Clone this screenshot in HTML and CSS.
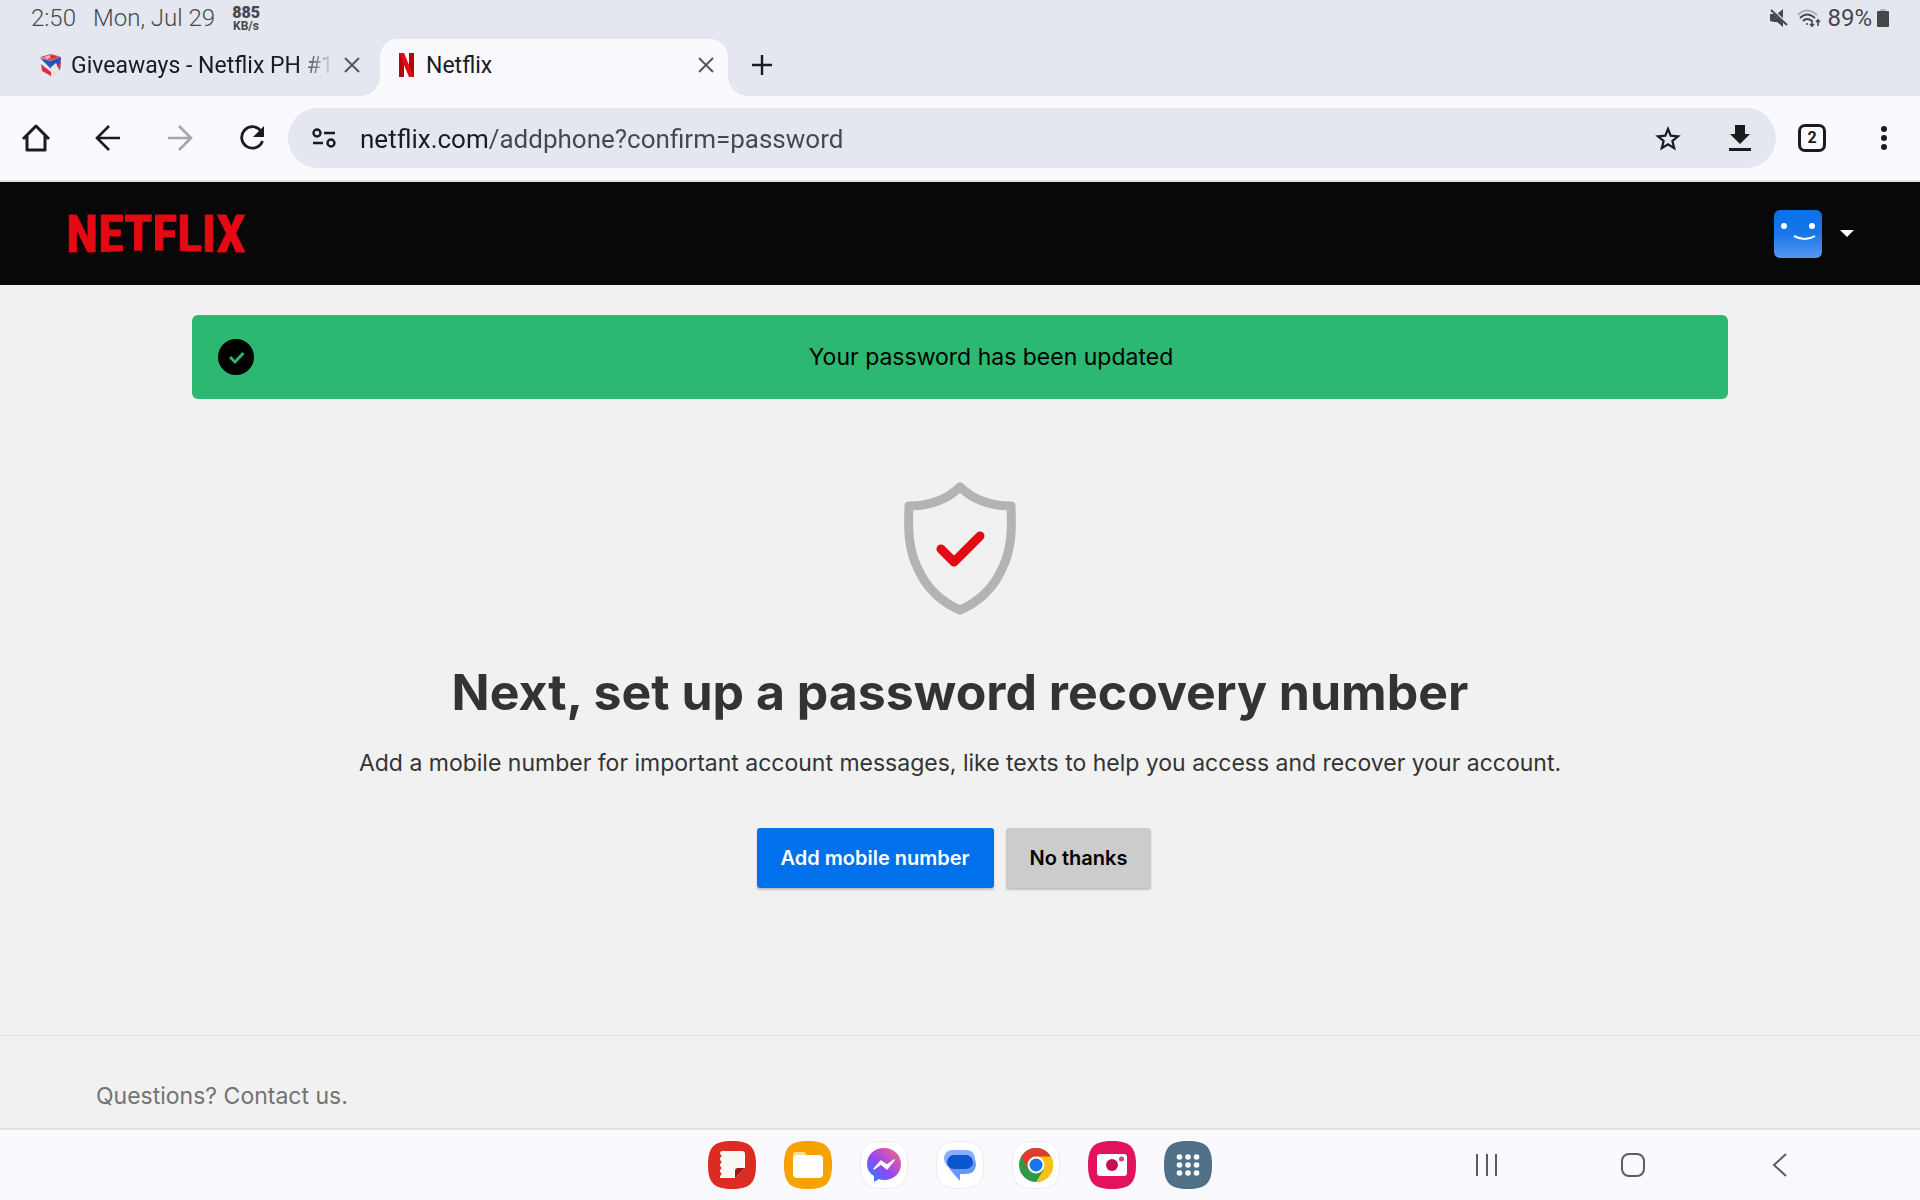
FILE: index.html
```html
<!DOCTYPE html>
<html lang="en">
<head>
    <meta charset="UTF-8">
    <meta name="viewport" content="width=device-width, initial-scale=1.0">
    <title>Netflix</title>
    <link rel="stylesheet" href="styles.css">
</head>
<body>
    <!-- Status bar -->
    <div class="status-bar">
        <span class="clock">2:50</span>
        <span class="date">Mon, Jul 29</span>
        <span class="speed"><b>885</b><small>KB/s</small></span>
        <div class="status-right">
            <svg width="18" height="18" viewBox="0 0 18 18" fill="#46474b">
                <path d="M0 5h4l9 8v5L7 13H4l-4-1z"/>
                <path d="M7 5l6-5v11z"/>
                <path d="M1 0l17 16" stroke="#e4e7f0" stroke-width="3"/>
                <path d="M1 1l16 15" stroke="#46474b" stroke-width="2"/>
            </svg>
            <svg class="wifi" width="25" height="20" viewBox="0 0 25 20" fill="none" stroke="#46474b" stroke-width="2">
                <path d="M1 7q9-9 19 0" stroke="#a9abb2"/>
                <path d="M3 10q7-7 15 0M6 13q4-4 9 0"/>
                <circle cx="10" cy="16" r="1" fill="#46474b" stroke="none"/>
                <path d="M15 12v6m-2-2l2 2 2-2M21 18v-6m-2 2l2-2 2 2" stroke-width="1.6"/>
            </svg>
            <span class="percent">89%</span>
            <svg width="12" height="18" viewBox="0 0 12 18">
                <rect x="3" y="0" width="6" height="3" rx="1" fill="#b4b6bd"/>
                <rect x="0" y="2" width="12" height="16" rx="1" fill="#46474b"/>
            </svg>
        </div>
    </div>

    <!-- Tabs -->
    <nav class="tabs">
        <div class="tab">
            <svg class="favicon" width="24" height="24" viewBox="0 0 24 24">
                <path d="M1 4l11-3 10 3-10 4z" fill="#e34a4f"/>
                <path d="M5 4l7-2 3 1-7 3z" fill="#f3b9bd"/>
                <path d="M12 2l6 1-4 2-3-1z" fill="#c62a33"/>
                <path d="M1 5l11 3v15L3 18z" fill="#e9e9f4"/>
                <path d="M1 5l11 3v8z" fill="#2857b9"/>
                <path d="M2 11l10 8v4l-9-5z" fill="#d8303c"/>
                <path d="M12 8l10-4-1 13-9 6z" fill="#2450b5"/>
                <path d="M12 14l5-4 4 8-9 5z" fill="#e8e4d8"/>
                <path d="M18 13l4-5-1 9z" fill="#d53642"/>
            </svg>
            <a class="tab-title fade" href="#">Giveaways - Netflix PH #1</a>
            <button class="close" aria-label="Close tab">
                <svg width="16" height="16" viewBox="0 0 16 16"><path d="M1 1l14 14M15 1L1 15" stroke="#55575d" stroke-width="2"/></svg>
            </button>
        </div>
        <div class="tab active">
            <svg class="favicon" width="15" height="24" viewBox="0 0 15 24">
                <rect width="5" height="24" fill="#b1060f"/>
                <rect x="10" width="5" height="24" fill="#b1060f"/>
                <path d="M0 0h5l10 24h-5z" fill="#e50914"/>
            </svg>
            <a class="tab-title" href="#">Netflix</a>
            <button class="close" aria-label="Close tab">
                <svg width="16" height="16" viewBox="0 0 16 16"><path d="M1 1l14 14M15 1L1 15" stroke="#55575d" stroke-width="2"/></svg>
            </button>
        </div>
        <button class="new-tab" aria-label="New tab">
            <svg width="20" height="20" viewBox="0 0 20 20"><path d="M10 0v20M0 10h20" stroke="#1b1b1f" stroke-width="2.4"/></svg>
        </button>
    </nav>

    <!-- Toolbar -->
    <div class="toolbar">
        <button class="tool" aria-label="Home">
            <svg width="28" height="28" viewBox="0 0 28 28" fill="none" stroke="#1b1b1f" stroke-width="3" stroke-linejoin="round"><path d="M1 15L14 2l13 13M5 12v14h18V12"/></svg>
        </button>
        <button class="tool" aria-label="Back">
            <svg width="26" height="26" viewBox="0 0 26 26" fill="none" stroke="#1b1b1f" stroke-width="2.6"><path d="M25 13H3M14 1L2 13l12 12"/></svg>
        </button>
        <button class="tool" aria-label="Forward" disabled>
            <svg width="26" height="26" viewBox="0 0 26 26" fill="none" stroke="#a5a5ab" stroke-width="2.6"><path d="M1 13h22M12 1l12 12-12 12"/></svg>
        </button>
        <button class="tool" aria-label="Reload">
            <svg width="26" height="26" viewBox="0 0 26 26"><path d="M22 6A10.7 10.7 0 1 0 23.500 16" fill="none" stroke="#1b1b1f" stroke-width="2.800"/><path d="M25 1v11H14z" fill="#1b1b1f"/></svg>
        </button>
        <div class="address">
            <button class="tool" aria-label="Site information">
                <svg width="24" height="20" viewBox="0 0 24 20" fill="none" stroke="#1b1b1f" stroke-width="2.4">
                    <circle cx="5" cy="5" r="3.500"/><path d="M12 5h11M1 15h10"/><circle cx="19" cy="15" r="3.500"/>
                </svg>
            </button>
            <input class="url" type="text" aria-label="Address" value="netflix.com/addphone?confirm=password">
            <button class="tool" aria-label="Bookmark">
                <svg width="28" height="28" viewBox="0 0 28 28" fill="none" stroke="#1b1b1f" stroke-width="2.2"><path d="M14 5l2.700 6.700 7.300.6-5.600 4.700 1.800 7.200L14 20.300l-6.200 3.900 1.800-7.200L4 12.300l7.300-.6z"/></svg>
            </button>
            <button class="tool" aria-label="Downloads">
                <svg width="22" height="26" viewBox="0 0 22 26" fill="#1b1b1f"><path d="M6 0h10v9h5L11 19 1 9h5zM0 23h22v3H0z"/></svg>
            </button>
        </div>
        <button class="tool" aria-label="Open tabs"><span class="tab-count">2</span></button>
        <button class="tool" aria-label="Menu">
            <svg width="6" height="26" viewBox="0 0 6 26" fill="#1b1b1f"><circle cx="3" cy="4" r="3"/><circle cx="3" cy="13" r="3"/><circle cx="3" cy="22" r="3"/></svg>
        </button>
    </div>

    <!-- Site header -->
    <header class="site-header">
        <a class="logo" href="#" aria-label="Netflix">
            <svg width="180" height="60" viewBox="0 0 180 60">
                <text class="logo-text" x="90" y="48" text-anchor="middle">NETFLIX</text>
                <!-- curved foot of the wordmark -->
                <path d="M0 51Q90 42 180 51v9H0z" fill="#080808"/>
            </svg>
        </a>
        <button class="profile" aria-label="Account">
            <svg class="avatar" width="48" height="48" viewBox="0 0 48 48">
                <defs>
                    <linearGradient id="face" x1="0" y1="0" x2="0" y2="1">
                        <stop offset="0" stop-color="#0a70e8"/>
                        <stop offset=".5" stop-color="#1877e9"/>
                        <stop offset="1" stop-color="#5799f0"/>
                    </linearGradient>
                </defs>
                <rect width="48" height="48" rx="6" fill="url(#face)"/>
                <circle cx="10" cy="16" r="3" fill="#fff"/>
                <circle cx="38" cy="16" r="3" fill="#fff"/>
                <path d="M20 26q11 6 21 0" fill="none" stroke="#fff" stroke-width="2"/>
            </svg>
            <svg width="14" height="7" viewBox="0 0 14 7"><path d="M0 0h14L7 7z" fill="#fff"/></svg>
        </button>
    </header>

    <main class="content">
        <div class="banner" role="status">
            <svg width="36" height="36" viewBox="0 0 36 36">
                <circle cx="18" cy="18" r="18"/>
                <path d="M12 18l5 5 8.500-9" fill="none" stroke="#2db871" stroke-width="2.8"/>
            </svg>
            <p>Your password has been updated</p>
        </div>

        <svg class="shield" width="112" height="134" viewBox="0 0 112 134" fill="none" stroke-linecap="round" stroke-linejoin="round">
            <path d="M56 5Q36 24 5 24C4 48 4 68 15 89Q28 116 56 128Q84 116 97 89C108 68 108 48 107 24Q76 24 56 5z" stroke="#b3b3b3" stroke-width="9"/>
            <path d="M37 67l13 13 26-26" stroke="#e50914" stroke-width="9"/>
        </svg>

        <h1>Next, set up a password recovery number</h1>
        <p class="intro">Add a mobile number for important account messages, like texts to help you access and recover your account.</p>
        <div class="actions">
            <button class="btn primary">Add mobile number</button>
            <button class="btn">No thanks</button>
        </div>
    </main>

    <footer class="site-footer">
        <a href="#">Questions? Contact us.</a>
    </footer>

    <!-- Taskbar -->
    <nav class="taskbar">
        <div class="apps">
            <button class="app" aria-label="Notes">
                <svg width="48" height="48" viewBox="0 0 48 48">
                    <path d="M24 0C42 0 48 6 48 24S42 48 24 48 0 42 0 24 6 0 24 0z" fill="#dc2c22"/>
                    <path d="M14 10h20q3 0 3 3v14l-10 10H12v-2q3-2 0-4v-2q3-2 0-4v-2q3-2 0-4v-2q3-2 0-4 0-3 2-3z" fill="#f8f7f2"/>
                    <path d="M27 37V30q0-3 3-3h7z" fill="#9f1717"/>
                </svg>
            </button>
            <button class="app" aria-label="Files">
                <svg width="48" height="48" viewBox="0 0 48 48">
                    <path d="M24 0C42 0 48 6 48 24S42 48 24 48 0 42 0 24 6 0 24 0z" fill="#f6a200"/>
                    <path d="M9 20v-6q0-3 3-3h8q2 0 2 3h4v5z" fill="#fcdb9a"/>
                    <rect x="9" y="14" width="30" height="23" rx="4" fill="#fff"/>
                </svg>
            </button>
            <button class="app" aria-label="Messenger">
                <svg width="48" height="48" viewBox="0 0 48 48">
                    <defs>
                        <linearGradient id="bolt" x1="0" y1="1" x2="1" y2="0">
                            <stop offset="0" stop-color="#0a8cff"/>
                            <stop offset=".45" stop-color="#9547f5"/>
                            <stop offset="1" stop-color="#ff6878"/>
                        </linearGradient>
                    </defs>
                    <path d="M24 .5C42 .5 47.500 6 47.500 24S42 47.500 24 47.500.5 42 .5 24 6 .5 24 .5z" fill="#fff" stroke="#ebebef"/>
                    <path d="M24 7c10 0 17 7 17 16s-7 16-17 16q-3 0-5-1l-5 3v-6q-7-4-7-12C7 14 14 7 24 7z" fill="url(#bolt)"/>
                    <path d="M14 28l7-8 6 4 7-5-7 9-6-5z" fill="#fff" stroke="#fff" stroke-width="1.500" stroke-linejoin="round"/>
                </svg>
            </button>
            <button class="app" aria-label="Messages">
                <svg width="48" height="48" viewBox="0 0 48 48">
                    <path d="M24 .5C42 .5 47.500 6 47.500 24S42 47.500 24 47.500.5 42 .5 24 6 .5 24 .5z" fill="#fff" stroke="#ebebef"/>
                    <path d="M8 17q3 8 8 14l8 9v-7h6q9 0 10-9 0-4-2-8z" fill="#6896f9"/>
                    <path d="M17 9h13q8 0 9 8-2 9-9 11H18Q8 26 8 17q1-8 9-8z" fill="#8aaef9"/>
                    <rect x="11" y="14" width="26" height="14" rx="7" fill="#0b57d0"/>
                </svg>
            </button>
            <button class="app" aria-label="Chrome">
                <svg width="48" height="48" viewBox="0 0 48 48">
                    <path d="M24 .5C42 .5 47.500 6 47.500 24S42 47.500 24 47.500.5 42 .5 24 6 .5 24 .5z" fill="#fff" stroke="#ebebef"/>
                    <circle cx="24" cy="24" r="17" fill="#2d9a4b"/>
                    <path d="M24 24V15h14.700A17 17 0 0 1 24 41l7.800-12.500z" fill="#fbc116"/>
                    <path d="M9.300 15.500A17 17 0 0 1 38.700 15.500H24L16.200 28.500z" fill="#e03b2d"/>
                    <circle cx="24" cy="24" r="8.500" fill="#fff"/>
                    <circle cx="24" cy="24" r="6.500" fill="#1a73e8"/>
                </svg>
            </button>
            <button class="app" aria-label="Camera">
                <svg width="48" height="48" viewBox="0 0 48 48">
                    <path d="M24 0C42 0 48 6 48 24S42 48 24 48 0 42 0 24 6 0 24 0z" fill="#e3125f"/>
                    <rect x="9" y="13" width="30" height="22" rx="3" fill="#fff"/>
                    <circle cx="24" cy="24" r="6" fill="#c50f54"/>
                    <circle cx="33.500" cy="18" r="2.500" fill="#d4456f"/>
                </svg>
            </button>
            <button class="app" aria-label="All apps">
                <svg width="48" height="48" viewBox="0 0 48 48">
                    <path d="M24 0C42 0 48 6 48 24S42 48 24 48 0 42 0 24 6 0 24 0z" fill="#507087"/>
                    <g fill="#fff">
                        <circle cx="15.500" cy="16" r="2.800"/><circle cx="24" cy="16" r="2.800"/><circle cx="32.500" cy="16" r="2.800"/>
                        <circle cx="15.500" cy="24" r="2.800"/><circle cx="24" cy="24" r="2.800"/><circle cx="32.500" cy="24" r="2.800"/>
                        <circle cx="15.500" cy="32" r="2.800"/><circle cx="24" cy="32" r="2.800"/><circle cx="32.500" cy="32" r="2.800"/>
                    </g>
                </svg>
            </button>
        </div>
        <div class="system-nav">
            <button aria-label="Recents">
                <svg width="24" height="24" viewBox="0 0 24 24"><path d="M3 1v22M13 1v22M22 1v22" stroke="#5c5c60" stroke-width="2"/></svg>
            </button>
            <button aria-label="Home screen">
                <svg width="24" height="24" viewBox="0 0 24 24"><rect x="1" y="1" width="22" height="22" rx="7" fill="none" stroke="#5c5c60" stroke-width="2"/></svg>
            </button>
            <button aria-label="Go back">
                <svg width="24" height="24" viewBox="0 0 24 24"><path d="M18 1L6 12l12 11" fill="none" stroke="#5c5c60" stroke-width="2"/></svg>
            </button>
        </div>
    </nav>
</body>
</html>
```

FILE: styles.css
```css
* {
    box-sizing: border-box;
}

body {
    display: flex;
    flex-direction: column;
    min-height: 100vh;
    margin: 0;
    background: #f1f1f1;
    color: #333;
    font-family: Inter, "Liberation Sans", sans-serif;
}

h1,
p {
    margin: 0;
}

a {
    color: inherit;
    text-decoration: none;
}

button {
    display: flex;
    align-items: center;
    justify-content: center;
    padding: 0;
    border: 0;
    background: none;
    color: inherit;
    font: inherit;
}

svg {
    display: block;
    flex: none;
}

/* Status bar and tabs */
.status-bar {
    display: flex;
    align-items: center;
    gap: 17px;
    height: 36px;
    padding: 0 31px;
    background: #e4e7f0;
    color: #46474b;
    font-family: Roboto, sans-serif;
    font-size: 24px;
    font-weight: 300;
}

.speed {
    display: flex;
    flex-direction: column;
    align-items: center;
    font-weight: 700;
}

.speed b {
    font-size: 16px;
    line-height: 15px;
}

.speed small {
    font-size: 12px;
    line-height: 12px;
}

.status-right {
    display: flex;
    align-items: center;
    gap: 5px;
    margin-left: auto;
}

.wifi {
    margin-left: 4px;
}

.percent {
    font-weight: 400;
}

.tabs {
    display: flex;
    height: 60px;
    padding-top: 3px;
    background: #e4e7f0;
    color: #1b1b1f;
    font-family: Roboto, sans-serif;
    font-size: 23px;
}

.tab {
    display: flex;
    align-items: center;
    width: 380px;
    padding: 0 16px 5px 39px;
}

.tab-title {
    flex: 1;
    margin-left: 8px;
    white-space: nowrap;
}

.fade {
    -webkit-mask-image: linear-gradient(90deg, #000 86%, transparent);
    mask-image: linear-gradient(90deg, #000 86%, transparent);
}

.close {
    width: 24px;
    height: 24px;
    margin-left: 6px;
}

.active {
    position: relative;
    width: 348px;
    padding: 0 10px 5px 19px;
    border-radius: 18px 18px 0 0;
    background: #faf9fe;
}

.active .tab-title {
    margin-left: 12px;
}

/* Outward curves at the foot of the active tab */
.active::before,
.active::after {
    content: "";
    position: absolute;
    bottom: 0;
    width: 20px;
    height: 20px;
}

.active::before {
    right: 100%;
    background: radial-gradient(circle at 0 0, transparent 20px, #faf9fe 20px);
}

.active::after {
    left: 100%;
    background: radial-gradient(circle at 100% 0, transparent 20px, #faf9fe 20px);
}

.new-tab {
    width: 68px;
    padding-bottom: 6px;
}

/* Toolbar */
.toolbar {
    display: flex;
    align-items: center;
    height: 86px;
    border-bottom: 2px solid #e3e3e8;
    background: #faf9fe;
    color: #1b1b1f;
    font-family: Roboto, sans-serif;
}

.tool {
    flex: none;
    width: 72px;
    height: 60px;
}

.address {
    display: flex;
    flex: 1;
    height: 60px;
    border-radius: 30px;
    background: #e4e7f0;
}

/* The host part of the URL is darker than the path */
.url {
    flex: 1;
    min-width: 0;
    padding: 2px 0 0;
    border: 0;
    background: linear-gradient(90deg, #1b1b1f 129px, #45474f 129px);
    -webkit-background-clip: text;
    background-clip: text;
    color: transparent;
    font-family: inherit;
    font-size: 26px;
}

.tab-count {
    width: 28px;
    height: 28px;
    border: 3px solid #1b1b1f;
    border-radius: 7px;
    font-size: 16px;
    font-weight: 700;
    line-height: 22px;
}

/* Page */
.site-header {
    display: flex;
    align-items: center;
    justify-content: space-between;
    height: 103px;
    padding: 0 66px;
    background: #080808;
}

.logo-text {
    fill: #e50914;
    stroke: #e50914;
    stroke-width: 1px;
    font-family: "Roboto Condensed", "Open Sans Condensed", Roboto, sans-serif;
    font-size: 52px;
    font-weight: 700;
}

.profile {
    gap: 18px;
}

.content {
    display: flex;
    flex: 1;
    flex-direction: column;
    align-items: center;
    padding: 30px 10%;
}

.banner {
    display: flex;
    align-items: center;
    align-self: stretch;
    height: 84px;
    padding: 0 26px;
    border-radius: 6px;
    background: #2db871;
    color: #000;
    font-size: 23px;
}

.banner p {
    flex: 1;
    padding-right: 36px;
    text-align: center;
}

.shield {
    margin-top: 83px;
}

h1 {
    margin-top: 44px;
    font-size: 50px;
    line-height: 64px;
    text-align: center;
}

.intro {
    margin-top: 23px;
    font-size: 23px;
    line-height: 32px;
    text-align: center;
}

.actions {
    display: flex;
    gap: 12px;
    margin-top: 49px;
    padding-right: 12px;
}

.banner p {
    padding: 0 0 0 26px;
}

.btn {
    height: 60px;
    padding: 0 24px;
    border-radius: 3px;
    background: #ccc;
    box-shadow: 0 2px 2px rgba(0, 0, 0, 0.2);
    color: #000;
    font-size: 20px;
    font-weight: 600;
}

.primary {
    background: #0071eb;
    color: #fff;
}

.site-footer {
    height: 93px;
    padding: 44px 96px 0;
    border-top: 1px solid #e2e2e2;
    color: #737373;
    font-size: 23px;
    line-height: 32px;
}

/* Taskbar */
.taskbar {
    display: grid;
    grid-template-columns: 1fr auto 1fr;
    align-items: center;
    height: 72px;
    border-top: 2px solid #e2e1e6;
    background: #faf9fe;
}

.apps {
    display: flex;
    grid-column: 2;
    gap: 28px;
}

.system-nav {
    display: flex;
    justify-content: flex-end;
    padding-right: 67px;
}

.system-nav button {
    width: 147px;
    height: 60px;
}
```
